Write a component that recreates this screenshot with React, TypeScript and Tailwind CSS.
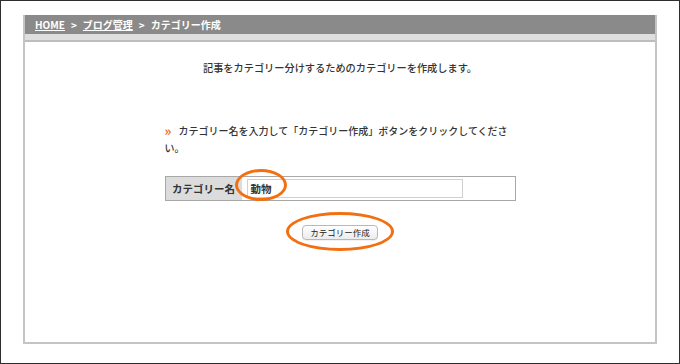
import React from "react";

const font = { fontFamily: '"Noto Sans CJK JP", "Noto Sans", sans-serif' };

export default function App() {
  return (
    <div
      className="w-[680px] h-[364px] bg-white border border-[#2e2e2e] pt-[14px] pl-[22px] pr-[22px] pb-[19px] text-[#333]"
      style={font}
    >
      <div className="h-full border-x-2 border-b-2 border-[#c4c4c4] flex flex-col">
        <div className="h-[19px] bg-[#8a8a8a] flex items-center pl-[10px] text-white text-[10px] font-bold gap-[6px] leading-none">
          <span className="underline">HOME</span>
          <span>&gt;</span>
          <span className="underline">ブログ管理</span>
          <span>&gt;</span>
          <span>カテゴリー作成</span>
        </div>
        <div className="h-[8px] bg-[#dedede] border-b-2 border-[#bdbdbd]" />
        <div className="flex-1 flex flex-col items-center pt-[18px]">
          <p className="text-[10.2px] leading-[16px] font-medium">
            記事をカテゴリー分けするためのカテゴリーを作成します。
          </p>
          <div className="w-[351px] mt-[46px] relative">
            <div className="flex items-start text-[10px] leading-[17px] font-medium">
              <span className="text-[#f26a12] font-bold text-[13px] leading-[17px] w-[14px] shrink-0">»</span>
              <p className="pr-[4px]">
                カテゴリー名を入力して「カテゴリー作成」ボタンをクリックしてくださ
              </p>
            </div>
            <p className="text-[10px] leading-[17px] font-medium">い。</p>
            <div className="mt-[20px] h-[25px] border border-[#a8a8a8] flex relative">
              <div className="w-[76px] bg-[#dcdcdc] flex items-center justify-center text-[10.5px] font-bold">
                カテゴリー名
              </div>
              <div className="flex-1 flex items-center pl-[5px]">
                <div className="w-[216px] h-[19px] border border-[#d0d0d0] bg-white flex items-center pl-[3px] text-[10.5px] font-bold">
                  動物
                </div>
              </div>
              <div className="absolute left-[69px] top-[-8px] w-[52px] h-[32px] rounded-[50%] border-[3px] border-[#f27012]" />
            </div>
            <div className="mt-[24px] flex justify-center">
              <div className="relative">
                <button className="w-[76px] h-[15px] rounded-[4px] border border-[#b8b8b8] bg-gradient-to-b from-white to-[#ececec] text-[8.5px] leading-none text-[#222] flex items-center justify-center shadow-[0_1px_0_rgba(0,0,0,0.05)]">
                  カテゴリー作成
                </button>
                <div className="absolute left-[-16px] top-[-13px] w-[108px] h-[39px] rounded-[50%] border-[3px] border-[#f27012]" />
              </div>
            </div>
          </div>
        </div>
      </div>
    </div>
  );
}
